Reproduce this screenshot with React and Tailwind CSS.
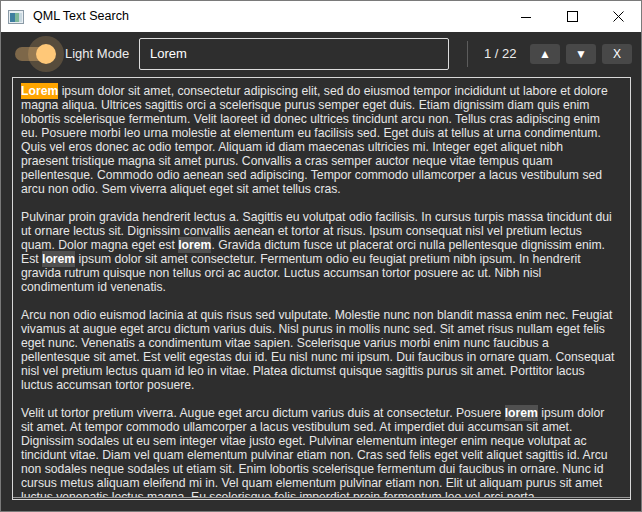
import React, { useState } from "react";

// lines as wrapped in the reference text area
const L = (t) => ({ hl: "match", t });
const paragraphs = [
  [
    [{ hl: "current", t: "Lorem" }, " ipsum dolor sit amet, consectetur adipiscing elit, sed do eiusmod tempor incididunt ut labore et dolore"],
    ["magna aliqua. Ultrices sagittis orci a scelerisque purus semper eget duis. Etiam dignissim diam quis enim"],
    ["lobortis scelerisque fermentum. Velit laoreet id donec ultrices tincidunt arcu non. Tellus cras adipiscing enim"],
    ["eu. Posuere morbi leo urna molestie at elementum eu facilisis sed. Eget duis at tellus at urna condimentum."],
    ["Quis vel eros donec ac odio tempor. Aliquam id diam maecenas ultricies mi. Integer eget aliquet nibh"],
    ["praesent tristique magna sit amet purus. Convallis a cras semper auctor neque vitae tempus quam"],
    ["pellentesque. Commodo odio aenean sed adipiscing. Tempor commodo ullamcorper a lacus vestibulum sed"],
    ["arcu non odio. Sem viverra aliquet eget sit amet tellus cras."],
  ],
  [
    ["Pulvinar proin gravida hendrerit lectus a. Sagittis eu volutpat odio facilisis. In cursus turpis massa tincidunt dui"],
    ["ut ornare lectus sit. Dignissim convallis aenean et tortor at risus. Ipsum consequat nisl vel pretium lectus"],
    ["quam. Dolor magna eget est ", L("lorem"), ". Gravida dictum fusce ut placerat orci nulla pellentesque dignissim enim."],
    ["Est ", L("lorem"), " ipsum dolor sit amet consectetur. Fermentum odio eu feugiat pretium nibh ipsum. In hendrerit"],
    ["gravida rutrum quisque non tellus orci ac auctor. Luctus accumsan tortor posuere ac ut. Nibh nisl"],
    ["condimentum id venenatis."],
  ],
  [
    ["Arcu non odio euismod lacinia at quis risus sed vulputate. Molestie nunc non blandit massa enim nec. Feugiat"],
    ["vivamus at augue eget arcu dictum varius duis. Nisl purus in mollis nunc sed. Sit amet risus nullam eget felis"],
    ["eget nunc. Venenatis a condimentum vitae sapien. Scelerisque varius morbi enim nunc faucibus a"],
    ["pellentesque sit amet. Est velit egestas dui id. Eu nisl nunc mi ipsum. Dui faucibus in ornare quam. Consequat"],
    ["nisl vel pretium lectus quam id leo in vitae. Platea dictumst quisque sagittis purus sit amet. Porttitor lacus"],
    ["luctus accumsan tortor posuere."],
  ],
  [
    ["Velit ut tortor pretium viverra. Augue eget arcu dictum varius duis at consectetur. Posuere ", L("lorem"), " ipsum dolor"],
    ["sit amet. At tempor commodo ullamcorper a lacus vestibulum sed. At imperdiet dui accumsan sit amet."],
    ["Dignissim sodales ut eu sem integer vitae justo eget. Pulvinar elementum integer enim neque volutpat ac"],
    ["tincidunt vitae. Diam vel quam elementum pulvinar etiam non. Cras sed felis eget velit aliquet sagittis id. Arcu"],
    ["non sodales neque sodales ut etiam sit. Enim lobortis scelerisque fermentum dui faucibus in ornare. Nunc id"],
    ["cursus metus aliquam eleifend mi in. Vel quam elementum pulvinar etiam non. Elit ut aliquam purus sit amet"],
    ["luctus venenatis lectus magna. Eu scelerisque felis imperdiet proin fermentum leo vel orci porta."],
    ["Non pulvinar neque laoreet suspendisse interdum consectetur libero id faucibus."],
  ],
];

function TitleBar() {
  return (
    <div className="flex h-[31px] items-center bg-white text-[12px] text-black">
      {/* app icon */}
      <svg width="16" height="14" viewBox="0 0 16 14" className="ml-[7px]">
        <rect x="0.5" y="0.5" width="15" height="13" fill="#e8eef2" stroke="#8a9aa6" />
        <rect x="2" y="3" width="5" height="9" fill="#3f7fa0" />
        <rect x="7" y="3" width="4" height="9" fill="#7fb89a" />
        <rect x="11" y="3" width="3" height="9" fill="#c8d8e0" />
      </svg>
      <span className="ml-[9px] text-[12.5px]">QML Text Search</span>
      <div className="ml-auto flex h-full items-center">
        <div className="flex h-full w-[46px] items-center justify-center">
          <svg width="10" height="10" viewBox="0 0 10 10">
            <line x1="0" y1="5.5" x2="10" y2="5.5" stroke="#000" strokeWidth="1" />
          </svg>
        </div>
        <div className="flex h-full w-[46px] items-center justify-center">
          <svg width="11" height="11" viewBox="0 0 11 11">
            <rect x="0.5" y="0.5" width="10" height="10" fill="none" stroke="#000" strokeWidth="1" />
          </svg>
        </div>
        <div className="flex h-full w-[46px] items-center justify-center">
          <svg width="11" height="11" viewBox="0 0 11 11">
            <path d="M0.5 0.5 L10.5 10.5 M10.5 0.5 L0.5 10.5" stroke="#000" strokeWidth="1" />
          </svg>
        </div>
      </div>
    </div>
  );
}

function Toggle({ on, onClick }) {
  return (
    <button onClick={onClick} className="relative h-[40px] w-[54px] shrink-0">
      <span className="absolute left-[5px] top-[13px] h-[14px] w-[36px] rounded-full bg-[#7d6749]" />
      <span className="absolute left-[18px] top-[2px] h-[36px] w-[36px] rounded-full bg-[#ffc878]/20" />
      <span className="absolute left-[26px] top-[10px] h-[20px] w-[20px] rounded-full bg-[#ffc878]" />
    </button>
  );
}

function NavButton({ children }) {
  return (
    <button className="flex h-[20px] w-[30px] items-center justify-center rounded-[3px] bg-[#484848] text-[12px] text-white">
      {children}
    </button>
  );
}

export default function App() {
  const [dark, setDark] = useState(true);

  return (
    <div
      className="flex h-[512px] w-[642px] flex-col overflow-hidden border border-[#7a7a7a] bg-[#2e2e2e]"
      style={{ fontFamily: '"Liberation Sans", Arial, sans-serif' }}
    >
      <TitleBar />

      {/* toolbar */}
      <div className="flex h-[44px] items-center pl-[9px] pr-[9px] text-[13px] text-[#ececec]">
        <Toggle on={dark} onClick={() => setDark(!dark)} />
        <span className="ml-[1px] whitespace-nowrap">Light Mode</span>
        <div className="ml-auto flex h-[32px] w-[310px] shrink-0 items-center rounded-[2px] border border-[#dcdcdc] pl-[10px] text-white">
          Lorem
        </div>
        <div className="ml-[18px] h-[26px] w-px shrink-0 bg-[#5c5c5c]" />
        <span className="ml-[16px] w-[46px] shrink-0 whitespace-nowrap">1 / 22</span>
        <div className="flex shrink-0 gap-[6px]">
          <NavButton>▲</NavButton>
          <NavButton>▼</NavButton>
          <NavButton>X</NavButton>
        </div>
      </div>

      {/* text area */}
      <div className="ml-[11px] mr-[10px] mt-[1px] h-[423px] border border-[#d8d8d8]">
        <div className="h-[420px] overflow-hidden border-b border-[#9a9a9a] pl-[8px] pr-[8px] pt-[6px] text-[12.2px] leading-[14px] text-[#e6e6e6]">
          {paragraphs.map((p, i) => (
            <div key={i} className="mb-[14px]">
              {p.map((line, k) => (
                <div key={k} className="whitespace-nowrap">
                  {line.map((seg, j) =>
                    typeof seg === "string" ? (
                      <span key={j}>{seg}</span>
                    ) : seg.hl === "current" ? (
                      <span key={j} className="bg-[#ffa500] py-[1px] font-bold text-white">
                        {seg.t}
                      </span>
                    ) : (
                      <span key={j} className="bg-[#505050] py-[1px] font-bold text-white">
                        {seg.t}
                      </span>
                    ),
                  )}
                </div>
              ))}
            </div>
          ))}
        </div>
      </div>
    </div>
  );
}
